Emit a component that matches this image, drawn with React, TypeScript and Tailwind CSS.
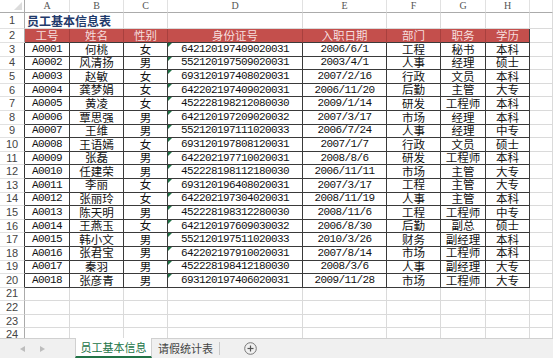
import React from "react";

const COLS = "grid grid-cols-[25px_45px_54px_44px_135px_84px_54px_45px_44px_1fr]";
const CJK = "font-['Noto_Sans_CJK_SC',sans-serif] text-[11.5px] leading-none";
const MONO = "font-['Liberation_Mono',monospace] text-[11px] tracking-[-0.6px] leading-none";

const data: string[][] = [
  ["A0001", "何桃", "女", "642120197409020031", "2006/6/1", "工程", "秘书", "本科"],
  ["A0002", "风清扬", "男", "552120197509020031", "2003/4/1", "人事", "经理", "硕士"],
  ["A0003", "赵敏", "女", "693120197408020031", "2007/2/16", "行政", "文员", "本科"],
  ["A0004", "龚梦娟", "女", "642202197409020031", "2006/11/20", "后勤", "主管", "大专"],
  ["A0005", "黄凌", "女", "452228198212080030", "2009/1/14", "研发", "工程师", "本科"],
  ["A0006", "覃思强", "男", "642120197209020032", "2007/3/17", "市场", "经理", "本科"],
  ["A0007", "王维", "男", "552120197111020033", "2006/7/24", "人事", "经理", "中专"],
  ["A0008", "王语嫣", "女", "693120197808120031", "2007/1/7", "行政", "文员", "硕士"],
  ["A0009", "张磊", "男", "642202197710020031", "2008/8/6", "研发", "工程师", "本科"],
  ["A0010", "任建荣", "男", "452228198112180030", "2006/11/11", "市场", "主管", "大专"],
  ["A0011", "李丽", "女", "693120196408020031", "2007/3/17", "工程", "主管", "大专"],
  ["A0012", "张丽玲", "女", "642202197304020031", "2008/11/19", "人事", "主管", "本科"],
  ["A0013", "陈天明", "男", "452228198312280030", "2008/11/6", "工程", "工程师", "中专"],
  ["A0014", "王燕玉", "女", "642120197609030032", "2006/8/30", "后勤", "副总", "硕士"],
  ["A0015", "韩小文", "男", "552120197511020033", "2010/3/26", "财务", "副经理", "本科"],
  ["A0016", "张君宝", "男", "642202197910020031", "2007/8/14", "市场", "工程师", "本科"],
  ["A0017", "秦羽", "男", "452228198412180030", "2008/3/6", "人事", "副经理", "大专"],
  ["A0018", "张彦青", "男", "693120197406020031", "2009/11/28", "市场", "工程师", "大专"],
];

const headers = ["工号", "姓名", "性别", "身份证号", "入职日期", "部门", "职务", "学历"];
const letters = ["A", "B", "C", "D", "E", "F", "G", "H", ""];

function RowNum({ n, dark }: { n: number; dark?: boolean }) {
  return (
    <div
      className={
        "flex items-center justify-center bg-white border-b border-b-[#e1e1e1] border-r font-['Liberation_Sans',sans-serif] text-[11px] leading-none text-[#444] " +
        (dark ? "border-r-[#333]" : "border-r-[#ababab]")
      }
    >
      {n}
    </div>
  );
}

function Empty() {
  return <div className="border-r border-b border-[#dadada]" />;
}

export default function App() {
  return (
    <div className="w-[553px] h-[358px] overflow-hidden bg-white flex flex-col">
      <div className="h-[338px] overflow-hidden">
        {/* column header */}
        <div className={COLS + " h-[13px]"}>
          <div className="relative bg-white border-r border-b border-[#ababab]">
            <svg className="absolute right-[2px] bottom-[2px]" width="8" height="8" viewBox="0 0 8 8">
              <polygon points="8,0 8,8 0,8" fill="#dcdcdc" />
            </svg>
          </div>
          {letters.map((l, i) => (
            <div
              key={i}
              className="flex items-center justify-center bg-white border-r border-r-[#e1e1e1] border-b border-b-[#ababab] font-['Liberation_Serif',serif] text-[10px] leading-none text-[#555]"
            >
              {l}
            </div>
          ))}
        </div>

        {/* row 1 title */}
        <div className={COLS + " h-[16px]"}>
          <RowNum n={1} />
          <div className="col-span-2 flex items-center pl-[2px] border-r border-b border-[#dadada]">
            <span className="font-['Noto_Sans_CJK_SC',sans-serif] text-[12px] leading-none font-bold text-[#1f3a6b]">
              员工基本信息表
            </span>
          </div>
          <Empty />
          <Empty />
          <Empty />
          <Empty />
          <Empty />
          <Empty />
          <Empty />
        </div>

        {/* row 2 header */}
        <div className={COLS + " h-[14px]"}>
          <RowNum n={2} />
          {headers.map((h, i) => (
            <div
              key={i}
              className={
                "flex items-center justify-center bg-[#c44f4c] border-b border-b-[#3a3a3a] border-r text-[#f6dede] " +
                CJK +
                (i === 7 ? " border-r-[#3a3a3a]" : " border-r-[#a8403e]")
              }
            >
              {h}
            </div>
          ))}
          <Empty />
        </div>

        {/* data rows */}
        {data.map((row, r) => (
          <div key={r} className={COLS + " h-[13.6px]"}>
            <RowNum n={r + 3} dark />
            {row.map((c, i) => {
              const mono = i === 0 || i === 3 || i === 4;
              return (
                <div
                  key={i}
                  className={
                    "relative flex items-center justify-center border-r border-b border-[#3a3a3a] text-[#111] " +
                    (mono ? MONO : CJK)
                  }
                >
                  {i === 3 && (
                    <span className="absolute left-0 top-0 w-0 h-0 border-t-[4px] border-t-[#1e7145] border-r-[4px] border-r-transparent" />
                  )}
                  <span className={mono ? "" : "-translate-y-[0.5px]"}>{c}</span>
                </div>
              );
            })}
            <Empty />
          </div>
        ))}

        {/* empty rows */}
        {[21, 22, 23, 24].map((n) => (
          <div key={n} className={COLS + " h-[13.6px]"}>
            <RowNum n={n} />
            {letters.map((_, i) => (
              <Empty key={i} />
            ))}
          </div>
        ))}
      </div>

      {/* sheet tabs */}
      <div className="h-[20px] flex items-stretch bg-[#f0f0f0] border-t border-[#d0d0d0]">
        <div className="w-[75px] flex items-center">
          <svg className="ml-[20px]" width="5" height="6" viewBox="0 0 5 6">
            <polygon points="5,0 5,6 0,3" fill="#bdbdbd" />
          </svg>
          <svg className="ml-[15px]" width="5" height="6" viewBox="0 0 5 6">
            <polygon points="0,0 0,6 5,3" fill="#bdbdbd" />
          </svg>
        </div>
        <div className="w-[77px] -mt-px bg-white border-x border-x-[#d0d0d0] border-b-2 border-b-[#217346] flex items-center justify-center">
          <span className="whitespace-nowrap text-[#217346] font-['Noto_Sans_CJK_SC',sans-serif] text-[11px] leading-none">
            员工基本信息
          </span>
        </div>
        <div className="w-[67px] flex items-center justify-center">
          <span className="whitespace-nowrap text-[#444] font-['Noto_Sans_CJK_SC',sans-serif] text-[11px] leading-none">
            请假统计表
          </span>
        </div>
        <div className="w-px my-[3px] bg-[#c8c8c8]" />
        <div className="w-[60px] flex items-center justify-center">
          <svg width="13" height="13" viewBox="0 0 13 13">
            <circle cx="6.5" cy="6.5" r="5.8" fill="none" stroke="#777" strokeWidth="1" />
            <line x1="6.5" y1="3.5" x2="6.5" y2="9.5" stroke="#555" strokeWidth="1.2" />
            <line x1="3.5" y1="6.5" x2="9.5" y2="6.5" stroke="#555" strokeWidth="1.2" />
          </svg>
        </div>
      </div>
    </div>
  );
}
